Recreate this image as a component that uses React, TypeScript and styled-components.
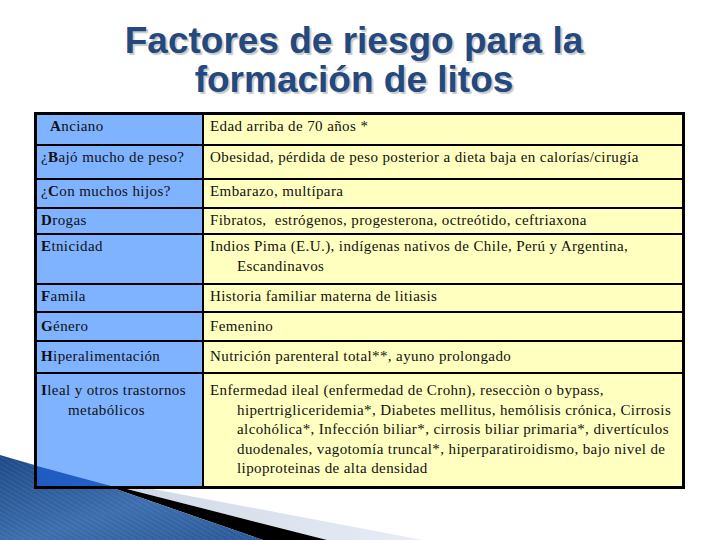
import React from 'react';
import styled, { createGlobalStyle } from 'styled-components';

const GlobalStyle = createGlobalStyle`
  html, body {
    margin: 0;
    padding: 0;
    background: #ffffff;
  }
`;

const Slide = styled.div`
  position: relative;
  width: 720px;
  height: 540px;
  overflow: hidden;
  background: #ffffff;
`;

const Swoosh = styled.svg`
  position: absolute;
  left: 0;
  bottom: 0;
  width: 720px;
  height: 120px;
  z-index: 0;
`;

const Title = styled.h1`
  position: relative;
  z-index: 1;
  margin: 0;
  padding: 21px 12px 0 0;
  font-family: "Liberation Sans", Arial, sans-serif;
  font-weight: bold;
  font-size: 37px;
  line-height: 39px;
  text-align: center;
  color: #24497f;
  text-shadow: 2px 2px 1px rgba(0, 0, 0, 0.22);
`;

const Table = styled.div<{ $rows: string }>`
  position: relative;
  z-index: 1;
  display: grid;
  grid-template-columns: 165px 478px;
  grid-template-rows: ${({ $rows }) => $rows};
  gap: 2px;
  width: max-content;
  margin: 13px 0 0 34px;
  background: #000000;
  border: 3px solid #000000;
`;

const Cell = styled.div<{ $head?: boolean; $top?: number; $wedge?: boolean }>`
  position: relative;
  overflow: hidden;
  box-sizing: border-box;
  padding: ${({ $top }) => $top ?? 2}px 4px 0 ${({ $head }) => ($head ? 4 : 6)}px;
  background: ${({ $head }) => ($head ? '#80b3ff' : '#ffffc0')};
  font-family: "Liberation Serif", "Times New Roman", serif;
  font-size: 15px;
  line-height: 19.5px;
  letter-spacing: 0.4px;
  color: #111111;

  ${({ $wedge }) =>
    $wedge
      ? `
    &::after {
      content: '';
      position: absolute;
      inset: 0;
      background: linear-gradient(90deg, #1f5bc0, #2a66cc);
      clip-path: polygon(0 calc(100% - 20px), 74px 100%, 0 100%);
    }
  `
      : ''}
`;

const Line = styled.div<{ $hang?: boolean; $lead?: number }>`
  padding-left: ${({ $hang, $lead }) => ($hang ? 27 : 0) + ($lead ?? 0)}px;
  white-space: pre;
`;

const Initial = styled.b`
  font-weight: bold;
`;

type Row = {
  head: string[];
  value: string[];
  height: number;
  headLead?: number;
  top?: number;
};

const rows: Row[] = [
  { head: ['Anciano'], value: ['Edad arriba de 70 años *'], height: 29, headLead: 9 },
  { head: ['¿Bajó mucho de peso?'], value: ['Obesidad, pérdida de peso posterior a dieta baja en calorías/cirugía'], height: 32 },
  { head: ['¿Con muchos hijos?'], value: ['Embarazo, multípara'], height: 27 },
  { head: ['Drogas'], value: ['Fibratos,  estrógenos, progesterona, octreótido, ceftriaxona'], height: 24 },
  {
    head: ['Etnicidad'],
    value: ['Indios Pima (E.U.), indígenas nativos de Chile, Perú y Argentina,', 'Escandinavos'],
    height: 48,
  },
  { head: ['Famila'], value: ['Historia familiar materna de litiasis'], height: 26 },
  { head: ['Género'], value: ['Femenino'], height: 27, top: 4 },
  { head: ['Hiperalimentación'], value: ['Nutrición parenteral total**, ayuno prolongado'], height: 30, top: 5 },
  {
    head: ['Ileal y otros trastornos', 'metabólicos'],
    value: [
      'Enfermedad ileal (enfermedad de Crohn), resecciòn o bypass,',
      'hipertrigliceridemia*, Diabetes mellitus, hemólisis crónica, Cirrosis',
      'alcohólica*, Infección biliar*, cirrosis biliar primaria*, divertículos',
      'duodenales, vagotomía truncal*, hiperparatiroidismo, bajo nivel de',
      'lipoproteinas de alta densidad',
    ],
    height: 112,
    top: 7,
  },
];

const HeadText = ({ text }: { text: string }) => {
  const lead = text.startsWith('¿') ? 1 : 0;
  return (
    <>
      {text.slice(0, lead)}
      <Initial>{text.charAt(lead)}</Initial>
      {text.slice(lead + 1)}
    </>
  );
};

export default function App() {
  return (
    <Slide>
      <GlobalStyle />
      <Swoosh viewBox="0 420 720 120" preserveAspectRatio="none">
        <defs>
          <linearGradient id="blueFill" x1="0" y1="0" x2="1" y2="1">
            <stop offset="0" stopColor="#1d4a86" />
            <stop offset="0.55" stopColor="#3d6eae" />
            <stop offset="1" stopColor="#2a5898" />
          </linearGradient>
          <linearGradient id="greyFill" x1="0" y1="0" x2="1" y2="0">
            <stop offset="0" stopColor="#c9d3e3" />
            <stop offset="1" stopColor="#e8edf5" />
          </linearGradient>
          <pattern id="stripes" width="4" height="4" patternUnits="userSpaceOnUse" patternTransform="rotate(-60)">
            <rect width="1" height="4" fill="#ffffff" opacity="0.07" />
          </pattern>
        </defs>
        <polygon points="52,470 423,540 327,540" fill="url(#greyFill)" />
        <polygon points="60,472 327,540 263,540 110,487" fill="#000000" />
        <polygon points="0,455 110,487 263,540 0,540" fill="url(#blueFill)" />
        <polygon points="0,455 110,487 263,540 0,540" fill="url(#stripes)" />
      </Swoosh>

      <Title>
        Factores de riesgo para la
        <br />
        formación de litos
      </Title>

      <Table $rows={rows.map((r) => `${r.height}px`).join(' ')}>
        {rows.map((row, i) => (
          <React.Fragment key={i}>
            <Cell $head $top={row.top} $wedge={i === rows.length - 1}>
              {row.head.map((t, j) => (
                <Line key={j} $hang={j > 0} $lead={j === 0 ? row.headLead : 0}>
                  {j === 0 ? <HeadText text={t} /> : t}
                </Line>
              ))}
            </Cell>
            <Cell $top={row.top}>
              {row.value.map((t, j) => (
                <Line key={j} $hang={j > 0}>
                  {t}
                </Line>
              ))}
            </Cell>
          </React.Fragment>
        ))}
      </Table>
    </Slide>
  );
}
